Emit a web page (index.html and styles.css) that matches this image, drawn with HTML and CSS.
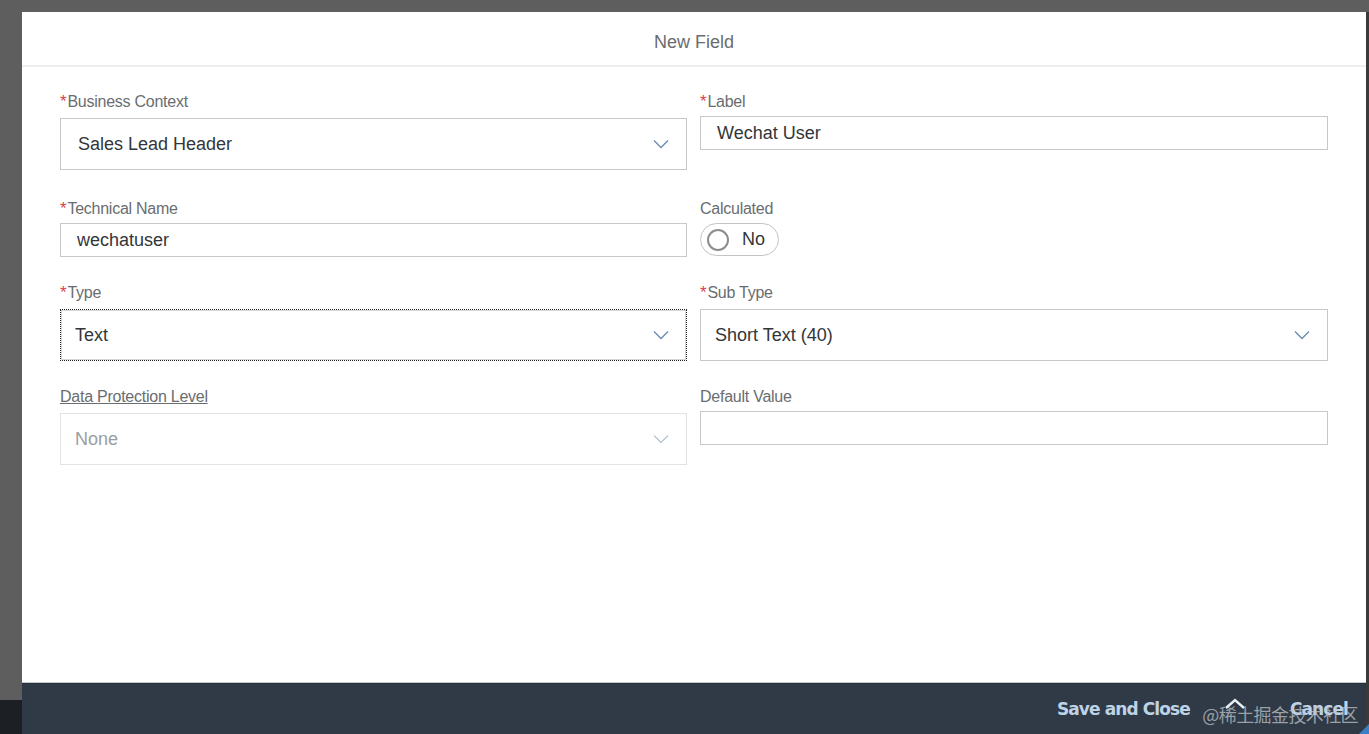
FILE: index.html
```html
<!DOCTYPE html>
<html>
<head>
<meta charset="utf-8">
<link rel="stylesheet" href="styles.css">
</head>
<body>
<div class="dialog">
  <header class="dlg-head">New Field</header>
  <main class="dlg-body">
    <div class="field first">
      <label class="lbl sel"><span class="req">*</span>Business Context</label>
      <div class="select">
        <span class="val">Sales Lead Header</span>
        <svg class="chev" width="16" height="10" viewBox="0 0 16 10"><path d="M1 1.5 L8 8.5 L15 1.5" fill="none" stroke="#6d8db0" stroke-width="1.4"/></svg>
      </div>
    </div>
    <div class="field first">
      <label class="lbl"><span class="req">*</span>Label</label>
      <div class="input"><span class="val">Wechat User</span></div>
    </div>
    <div class="field">
      <label class="lbl"><span class="req">*</span>Technical Name</label>
      <div class="input"><span class="val">wechatuser</span></div>
    </div>
    <div class="field">
      <label class="lbl"><span>Calculated</span></label>
      <div class="toggle"><span class="knob"></span><span class="tval">No</span></div>
    </div>
    <div class="field">
      <label class="lbl sel"><span class="req">*</span>Type</label>
      <div class="select focus">
        <span class="val tight">Text</span>
        <svg class="chev" width="16" height="10" viewBox="0 0 16 10"><path d="M1 1.5 L8 8.5 L15 1.5" fill="none" stroke="#6d8db0" stroke-width="1.4"/></svg>
      </div>
    </div>
    <div class="field">
      <label class="lbl sel"><span class="req">*</span>Sub Type</label>
      <div class="select">
        <span class="val tight">Short Text (40)</span>
        <svg class="chev" width="16" height="10" viewBox="0 0 16 10"><path d="M1 1.5 L8 8.5 L15 1.5" fill="none" stroke="#6d8db0" stroke-width="1.4"/></svg>
      </div>
    </div>
    <div class="field">
      <label class="lbl sel link">Data Protection Level</label>
      <div class="select disabled">
        <span class="val tight">None</span>
        <svg class="chev" width="16" height="10" viewBox="0 0 16 10"><path d="M1 1.5 L8 8.5 L15 1.5" fill="none" stroke="#b7c6d6" stroke-width="1.4"/></svg>
      </div>
    </div>
    <div class="field">
      <label class="lbl">Default Value</label>
      <div class="input"></div>
    </div>
  </main>
  <footer class="dlg-foot">
    <span class="btn">Save and Close</span>
    <span class="btn">Cancel</span>
    <div class="watermark">
      <svg class="wm-chev" width="22" height="12" viewBox="0 0 22 12"><path d="M2 10 L11 2 L20 10" fill="none" stroke="#e8eef4" stroke-width="2.4"/></svg>
      <span>@稀土掘金技术社区</span>
    </div>
    <span class="corner"></span>
  </footer>
</div>
</body>
</html>
```
FILE: styles.css
```css
html, body {
  margin: 0;
  padding: 0;
}
body {
  width: 1369px;
  height: 734px;
  overflow: hidden;
  background: linear-gradient(#5e5e5e 700px, #1c2024 700px);
  font-family: "Liberation Sans", Arial, sans-serif;
}
.dialog {
  margin: 12px 0 0 22px;
  width: 1344px;
  height: 722px;
  background: #fff;
  display: flex;
  flex-direction: column;
  box-shadow: 3px 0 0 #3a3a3a;
}
.dlg-head {
  height: 55px;
  box-sizing: border-box;
  padding-top: 20px;
  line-height: 20px;
  text-align: center;
  font-size: 18px;
  color: #6a6d70;
  border-bottom: 2px solid #eceeef;
}
.dlg-body {
  flex: 1;
  padding: 26px 38px 0 38px;
  display: grid;
  grid-template-columns: 627px 628px;
  column-gap: 13px;
  row-gap: 27px;
  align-content: start;
  align-items: start;
}
.field {
  display: flex;
  flex-direction: column;
}
.field.first {
  margin-bottom: 3px;
}
.lbl {
  height: 18px;
  line-height: 18px;
  font-size: 16px;
  color: #6a6d70;
  margin-bottom: 5px;
  letter-spacing: -0.25px;
}
.lbl.sel {
  margin-bottom: 7px;
}
.lbl.link {
  text-decoration: underline;
  align-self: flex-start;
}
.req {
  color: #d9404c;
  font-size: 17px;
  margin-right: 1px;
}
.select {
  height: 52px;
  box-sizing: border-box;
  border: 1px solid #c7c7c7;
  display: flex;
  align-items: center;
  justify-content: space-between;
  padding: 0 17px 0 17px;
  color: #32363a;
  font-size: 18px;
}
.select.focus {
  border: 1px dotted #222;
  box-shadow: inset 0 0 0 1px #d6d6d6;
}
.select.disabled {
  border-color: #e3e3e3;
  color: #9a9ea2;
}
.val.tight {
  margin-left: -3px;
}
.input {
  height: 34px;
  box-sizing: border-box;
  border: 1px solid #c7c7c7;
  display: flex;
  align-items: center;
  padding: 0 16px;
  color: #32363a;
  font-size: 18px;
}
.toggle {
  width: 79px;
  height: 33px;
  box-sizing: border-box;
  border: 1px solid #c3c3c3;
  border-radius: 17px;
  display: flex;
  align-items: center;
  padding-left: 6px;
  gap: 13px;
}
.knob {
  width: 18px;
  height: 18px;
  border: 2px solid #8d8d8d;
  border-radius: 50%;
}
.tval {
  font-size: 18px;
  color: #32363a;
}
.dlg-foot {
  position: relative;
  height: 52px;
  box-sizing: border-box;
  background: #2f3a46;
  border-top: 1px solid #c5cad0;
  box-shadow: inset 0 1px 0 #26303a;
  display: flex;
  justify-content: flex-end;
  align-items: center;
  padding-right: 18px;
  gap: 100px;
}
.btn {
  font-family: "DejaVu Sans", sans-serif;
  font-weight: bold;
  font-size: 17px;
  color: #bfd3e6;
  letter-spacing: -0.9px;
}
.watermark {
  position: absolute;
  right: 8px;
  top: 18px;
  display: flex;
  align-items: center;
  font-family: "Noto Sans CJK SC", sans-serif;
  font-size: 18px;
  letter-spacing: -0.6px;
  color: rgba(190, 196, 202, 0.75);
}
.wm-chev {
  position: absolute;
  left: 22px;
  top: -3px;
}
.corner {
  position: absolute;
  right: -3px;
  bottom: 0;
  width: 0;
  height: 0;
  border-left: 10px solid transparent;
  border-bottom: 10px solid #3b7fc4;
}
```
